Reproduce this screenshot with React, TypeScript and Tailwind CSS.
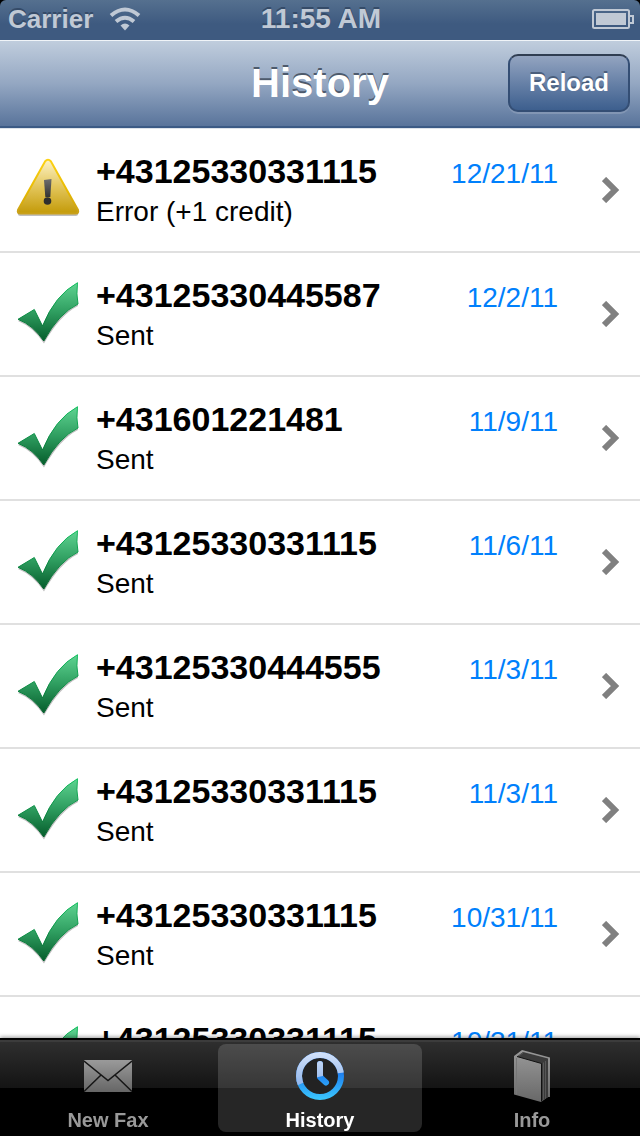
import type { ReactNode } from 'react';

type Fax = {
  id: number;
  number: string;
  status: string;
  date: string;
  failed?: boolean;
};

const faxes: Fax[] = [
  { id: 1, number: '+43125330331115', status: 'Error (+1 credit)', date: '12/21/11', failed: true },
  { id: 2, number: '+43125330445587', status: 'Sent', date: '12/2/11' },
  { id: 3, number: '+431601221481', status: 'Sent', date: '11/9/11' },
  { id: 4, number: '+43125330331115', status: 'Sent', date: '11/6/11' },
  { id: 5, number: '+43125330444555', status: 'Sent', date: '11/3/11' },
  { id: 6, number: '+43125330331115', status: 'Sent', date: '11/3/11' },
  { id: 7, number: '+43125330331115', status: 'Sent', date: '10/31/11' },
  { id: 8, number: '+43125330331115', status: 'Sent', date: '10/31/11' },
];

function WarningIcon() {
  return (
    <svg viewBox="0 0 64 64" className="size-16 shrink-0" aria-hidden="true">
      <defs>
        <linearGradient id="warn-fill" x1="0" y1="0" x2="0" y2="1">
          <stop offset="0" stopColor="#fdf3c8" />
          <stop offset="0.5" stopColor="#e3c65c" />
          <stop offset="1" stopColor="#c39a08" />
        </linearGradient>
        <linearGradient id="warn-edge" x1="0" y1="0" x2="0" y2="1">
          <stop offset="0" stopColor="#fdd215" />
          <stop offset="0.6" stopColor="#e6b800" />
          <stop offset="1" stopColor="#c9a01a" />
        </linearGradient>
        <linearGradient id="warn-mark" x1="0" y1="0" x2="0" y2="1">
          <stop offset="0" stopColor="#6e6e6e" />
          <stop offset="1" stopColor="#333" />
        </linearGradient>
      </defs>
      <path d="M32 5 L62 54 Q63 58 59.500 58 H4.500 Q1 58 2 54 Z" fill="#000" opacity="0.25" />
      <path
        d="M29 3.500 Q32 0 35 3.500 L62 52 Q63 55.500 59.500 55.500 H4.500 Q1 55.500 2 52 Z"
        fill="url(#warn-fill)"
        stroke="url(#warn-edge)"
        strokeWidth="2"
      />
      <path d="M28 22 L35.500 21 L34.300 39 H29.300 Z" fill="url(#warn-mark)" />
      <circle cx="31.500" cy="43" r="3.800" fill="#2e2e2e" />
    </svg>
  );
}

function CheckIcon() {
  return (
    <svg viewBox="0 0 64 64" className="size-16 shrink-0" aria-hidden="true">
      <defs>
        <linearGradient id="check-fill" x1="0" y1="0" x2="0" y2="1">
          <stop offset="0" stopColor="#5fd492" />
          <stop offset="0.5" stopColor="#2f9e60" />
          <stop offset="1" stopColor="#055c2b" />
        </linearGradient>
        <linearGradient id="check-edge" x1="0" y1="0" x2="0" y2="1">
          <stop offset="0" stopColor="#14c060" />
          <stop offset="1" stopColor="#04602c" />
        </linearGradient>
      </defs>
      <path d="M2 39 L18.500 29 L26.500 45 Q39 16 62 3 Q60.500 12 62 24 Q44 33 28 61.500 Q17 45 2 39 Z" fill="#000" opacity="0.25" />
      <path
        d="M2 37.300 L18.300 27.500 L26.500 44 Q39 13 61.500 0.700 Q60 12 62 22 Q43 31 27.800 59 Q17 43 2 37.300 Z"
        fill="url(#check-fill)"
        stroke="url(#check-edge)"
      />
    </svg>
  );
}

function WifiIcon() {
  return (
    <svg viewBox="0 0 32 24" className="h-6 w-8" fill="none" stroke="#c0c9d5" strokeWidth="4" aria-label="Wi-Fi" role="img">
      <path d="M2 8.500 Q16 -3.500 30 8.500" />
      <path d="M7 14.500 Q16 7 25 14.500" />
      <path d="M16 23.500 L11.500 18.500 Q16 14.500 20.500 18.500 Z" fill="#c0c9d5" stroke="none" />
    </svg>
  );
}

function BatteryIcon() {
  return (
    <svg viewBox="0 0 42 20" className="h-5 w-[42px]" aria-label="Battery full" role="img">
      <rect x="1" y="1" width="36" height="18" rx="1.500" fill="none" stroke="#c0c9d5" strokeWidth="2" />
      <rect x="4" y="4" width="30" height="12" fill="#c0c9d5" />
      <path d="M38 7 H41 V14 H38" fill="none" stroke="#c0c9d5" strokeWidth="2" />
    </svg>
  );
}

function EnvelopeIcon() {
  return (
    <svg viewBox="0 0 48 32" className="h-8 w-12" aria-hidden="true">
      <defs>
        <linearGradient id="tab-gray" x1="0" y1="0" x2="0" y2="1">
          <stop offset="0" stopColor="#9a9a9a" />
          <stop offset="1" stopColor="#666" />
        </linearGradient>
      </defs>
      <rect width="48" height="32" rx="0.500" fill="url(#tab-gray)" />
      <path d="M0 1 L24 20.500 L48 1 M0 31.500 L17 15 M48 31.500 L31 15" fill="none" stroke="#161616" strokeWidth="1.500" />
    </svg>
  );
}

function ClockIcon() {
  return (
    <svg viewBox="0 0 48 48" className="size-12" aria-hidden="true">
      <defs>
        <linearGradient id="clock-low" gradientUnits="userSpaceOnUse" x1="0" y1="20" x2="0" y2="48">
          <stop offset="0" stopColor="#1c7cf0" />
          <stop offset="1" stopColor="#3cc8fc" />
        </linearGradient>
        <linearGradient id="clock-high" gradientUnits="userSpaceOnUse" x1="0" y1="0" x2="0" y2="34">
          <stop offset="0" stopColor="#d3e2fa" />
          <stop offset="1" stopColor="#8fb4ea" />
        </linearGradient>
        <clipPath id="clock-shine">
          <path d="M0 0 H48 V20.500 Q24 22 0 34 Z" />
        </clipPath>
      </defs>
      <circle cx="24" cy="24" r="18" fill="#222" />
      <g fill="none" stroke="url(#clock-low)" strokeWidth="6">
        <circle cx="24" cy="24" r="21" />
        <path d="M24 12 V25 L30 30.500" strokeLinecap="round" strokeLinejoin="round" />
      </g>
      <g fill="none" stroke="url(#clock-high)" strokeWidth="6" clipPath="url(#clock-shine)">
        <circle cx="24" cy="24" r="21" />
        <path d="M24 12 V25 L30 30.500" strokeLinecap="round" strokeLinejoin="round" />
      </g>
    </svg>
  );
}

function BookIcon() {
  return (
    <svg viewBox="0 0 36 52" className="h-[52px] w-9" aria-hidden="true">
      <defs>
        <linearGradient id="book-cover" x1="0" y1="0" x2="0" y2="1">
          <stop offset="0" stopColor="#999" />
          <stop offset="1" stopColor="#686868" />
        </linearGradient>
      </defs>
      <path d="M0 6 L8 0 L36 7.500 V47 L34 47 L27 52 L0 44.500 Z" fill="url(#book-cover)" />
      <path d="M3 6.500 L9 2 L34 8.500 V47 L27.500 51 V13.500 Z" fill="#3a3a3a" />
      <path d="M4 6.500 L9.500 2.500 M29.500 12.500 V50 M31.500 11 V48.500" fill="none" stroke="#575757" />
      <path d="M3 6.500 L27.500 13.500 V51.500" fill="none" stroke="#111" />
      <path d="M2.500 8 V44.500" stroke="#777" />
    </svg>
  );
}

function FaxRow({ fax }: { fax: Fax }) {
  return (
    <li className="border-b-2 border-[#e0e0e0]">
      <a href={`#fax-${fax.id}`} className="flex h-[122px] items-center pl-4 pr-5">
        {fax.failed ? <WarningIcon /> : <CheckIcon />}
        <div className="ml-4 flex min-w-0 flex-1 flex-col">
          <div className="flex items-baseline justify-between">
            <span className="text-[34px] leading-10 font-bold text-black">{fax.number}</span>
            <span className="text-[28px] leading-10 text-[#0080fc]">{fax.date}</span>
          </div>
          <span className="text-[28px] leading-9 text-black">{fax.status}</span>
        </div>
        <svg viewBox="0 0 18 26" className="ml-11 h-[26px] w-[18px] shrink-0" aria-hidden="true">
          <path d="M2 2 L13 13 L2 24" fill="none" stroke="#808080" strokeWidth="6" />
        </svg>
      </a>
    </li>
  );
}

function Tab({ label, icon, active = false }: { label: string; icon: ReactNode; active?: boolean }) {
  return (
    <button
      type="button"
      aria-current={active ? 'page' : undefined}
      className={
        active
          ? 'flex flex-1 flex-col items-center rounded-lg bg-white/15 text-white'
          : 'flex flex-1 flex-col items-center text-[#999]'
      }
    >
      <span className="flex h-16 items-center justify-center">{icon}</span>
      <span className="text-xl leading-6 font-bold">{label}</span>
    </button>
  );
}

export default function App() {
  return (
    <div className="flex h-screen flex-col overflow-hidden bg-black font-['Liberation_Sans',Arial,sans-serif]">
      {/* Status bar */}
      <div className="grid h-10 shrink-0 grid-cols-3 items-center rounded-t-md bg-linear-to-b from-[#55708f] to-[#3e5a80] to-60% pb-0.5 pl-2 pr-1.5 font-bold text-[#c0c9d5] text-shadow-[0_-2px_0_#354b68]">
        <div className="flex items-center gap-4">
          <span className="text-[26px] leading-8">Carrier</span>
          <WifiIcon />
        </div>
        <span className="text-center text-[28px] leading-8">11:55 AM</span>
        <div className="flex justify-end">
          <BatteryIcon />
        </div>
      </div>

      {/* Navigation bar */}
      <header className="grid h-[88px] shrink-0 grid-cols-[1fr_auto_1fr] items-center border-t border-b-2 border-t-[#f0f4f8] border-b-[#3b5a85] bg-linear-to-b from-[#c0cddd] via-[#94a7c2] to-[#59749b] px-2.5 pb-0.5">
        <h1 className="col-start-2 text-[40px] leading-12 font-bold text-white text-shadow-[0_-2px_0_#4d5a6c]">History</h1>
        <button
          type="button"
          className="h-[58px] justify-self-end rounded-[10px] border-2 border-[#344e74] border-t-[#303e52] bg-linear-to-b from-[#93a4c0] to-[#3d5f8e] px-[19px] text-2xl font-bold text-white shadow-[0_2px_0_#8296b4] text-shadow-[0_-2px_0_#4a5e7c]"
        >
          Reload
        </button>
      </header>

      <main className="min-h-0 flex-1 overflow-y-auto border-t border-[#dde3ea] bg-white [scrollbar-width:none]">
        <ul>
          {faxes.map((fax) => (
            <FaxRow key={fax.id} fax={fax} />
          ))}
        </ul>
      </main>

      {/* Tab bar */}
      <nav className="relative flex h-[98px] shrink-0 gap-2 border-t-2 border-black bg-linear-to-b from-[#303030] via-[#141414] via-50% to-black to-50% px-1.5 pt-1 pb-1 shadow-[0_-1px_4px_rgba(0,0,0,0.4)] inset-shadow-[0_2px_0_#3c3c3c]">
        <Tab label="New Fax" icon={<EnvelopeIcon />} />
        <Tab label="History" icon={<ClockIcon />} active />
        <Tab label="Info" icon={<BookIcon />} />
      </nav>
    </div>
  );
}
